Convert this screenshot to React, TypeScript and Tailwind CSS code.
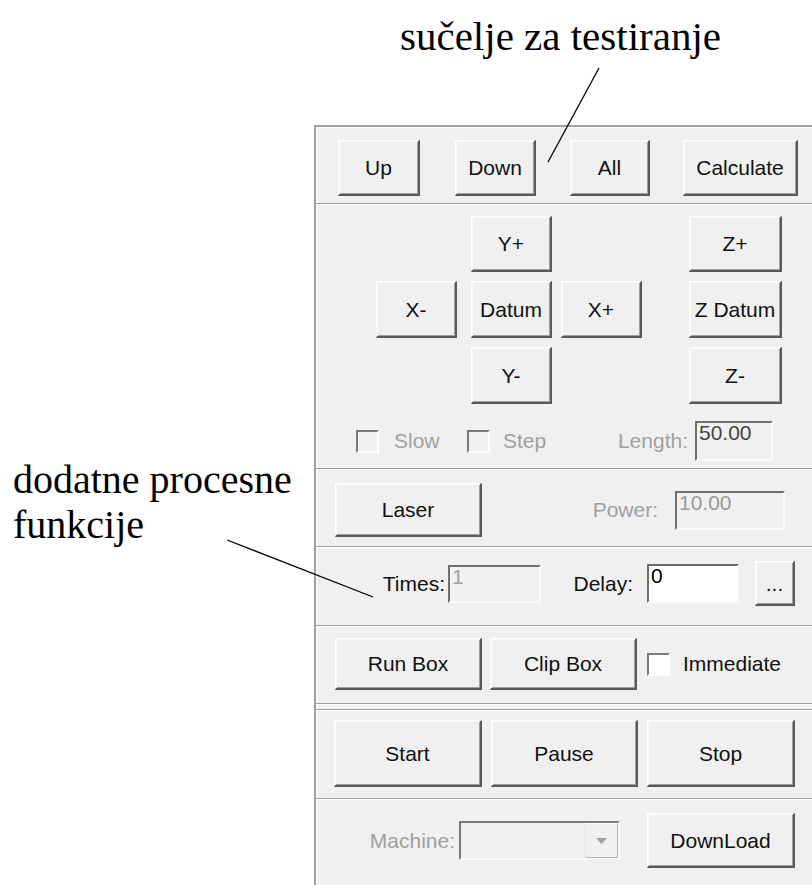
const ui = "font-['Liberation_Sans',Arial,sans-serif]";
const serif = "font-['Liberation_Serif','Times_New_Roman',serif]";

function Btn({ label, className = "" }: { label: string; className?: string }) {
  return (
    <div
      className={
        "flex shrink-0 items-center justify-center border-t border-l border-r-2 border-b-2 border-t-white border-l-white border-r-[#5a5a5a] border-b-[#5a5a5a] bg-[#f0f0f0] text-[21px] leading-none text-[#111] shadow-[inset_1px_1px_0_#f8f8f8,inset_-1px_-1px_0_#a0a0a0] " +
        className
      }
    >
      {label}
    </div>
  );
}

function Field({ value, className = "" }: { value: string; className?: string }) {
  return (
    <div
      className={
        "flex shrink-0 items-start border-2 border-t-[#6e6e6e] border-l-[#6e6e6e] border-r-[#fafafa] border-b-[#fafafa] pl-[2px] text-[21px] leading-[20px] " +
        className
      }
    >
      {value}
    </div>
  );
}

function Check({ className = "" }: { className?: string }) {
  return (
    <div
      className={
        "h-[23px] w-[23px] shrink-0 border-2 border-t-[#7a7a7a] border-l-[#7a7a7a] border-r-white border-b-white " +
        className
      }
    />
  );
}

export default function App() {
  return (
    <div className={"relative flex h-[885px] w-[812px] flex-col overflow-hidden bg-white " + ui}>
      {/* heading above the panel */}
      <div className={"h-[125px] shrink-0 pl-[400px] pt-[16px] text-[41px] leading-none text-black " + serif}>
        sučelje za testiranje
      </div>

      <div className="flex flex-1">
        {/* side note */}
        <div className={"w-[314px] shrink-0 pl-[13px] pt-[332px] text-[40px] leading-[45px] text-black " + serif}>
          dodatne procesne
          <br />
          funkcije
        </div>

        {/* control panel */}
        <div className="flex w-[498px] shrink-0 flex-col border-t-2 border-l-2 border-[#a0a0a0] bg-[#f0f0f0] shadow-[inset_1px_1px_0_#fff]">
          {/* Up / Down / All / Calculate */}
          <div className="flex h-[77px] items-start border-b border-[#a0a0a0] pl-[22px] pt-[13px]">
            <Btn label="Up" className="h-[56px] w-[82px]" />
            <Btn label="Down" className="ml-[35px] h-[56px] w-[81px]" />
            <Btn label="All" className="ml-[34px] h-[56px] w-[80px]" />
            <Btn label="Calculate" className="ml-[33px] h-[56px] w-[115px]" />
          </div>

          {/* jog pad */}
          <div className="h-[265px] border-t border-b border-t-white border-b-[#a0a0a0] pl-[60px] pt-[11px]">
            <div className="grid grid-cols-[81px_14px_81px_9px_81px_47px_93px] grid-rows-[56px_57px_57px] gap-y-[9px]">
              <Btn label="Y+" className="col-start-3 row-start-1" />
              <Btn label="Z+" className="col-start-7 row-start-1" />
              <Btn label="X-" className="col-start-1 row-start-2" />
              <Btn label="Datum" className="col-start-3 row-start-2" />
              <Btn label="X+" className="col-start-5 row-start-2" />
              <Btn label="Z Datum" className="col-start-7 row-start-2" />
              <Btn label="Y-" className="col-start-3 row-start-3" />
              <Btn label="Z-" className="col-start-7 row-start-3" />
            </div>
            <div className="-ml-[20px] mt-[17px] flex h-[40px] items-center text-[21px] text-[#a0a0a0]">
              <Check className="bg-[#f0f0f0]" />
              <span className="ml-[15px] w-[73px]">Slow</span>
              <Check className="bg-[#f0f0f0]" />
              <span className="ml-[13px] w-[57px]">Step</span>
              <span className="w-[128px] text-right">Length:</span>
              <Field value="50.00" className="ml-[7px] h-[40px] w-[78px] text-[#444]" />
            </div>
          </div>

          {/* laser */}
          <div className="h-[78px] border-t border-b border-t-white border-b-[#a0a0a0] pt-[13px]">
            <div className="flex h-[54px] items-center text-[21px]">
              <Btn label="Laser" className="ml-[19px] h-[54px] w-[147px]" />
              <span className="w-[176px] text-right text-[#a0a0a0]">Power:</span>
              <Field value="10.00" className="ml-[17px] h-[39px] w-[110px] text-[#9a9a9a]" />
            </div>
          </div>

          {/* times / delay */}
          <div className="h-[79px] border-t border-b border-t-white border-b-[#a0a0a0] pt-[13px]">
            <div className="flex h-[45px] items-center text-[21px] text-[#111]">
              <span className="w-[129px] text-right">Times:</span>
              <Field value="1" className="ml-[3px] h-[38px] w-[93px] text-[#a0a0a0]" />
              <span className="w-[92px] text-right">Delay:</span>
              <Field value="0" className="ml-[14px] h-[39px] w-[92px] bg-white text-black" />
              <Btn label="..." className="ml-[16px] h-[45px] w-[40px] text-[16px]" />
            </div>
          </div>

          {/* run box / clip box */}
          <div className="h-[78px] border-t border-b border-t-white border-b-[#a0a0a0] pt-[11px]">
            <div className="flex h-[52px] items-center text-[21px] text-[#111]">
              <Btn label="Run Box" className="ml-[19px] h-[52px] w-[147px]" />
              <Btn label="Clip Box" className="ml-[8px] h-[52px] w-[147px]" />
              <Check className="ml-[10px] bg-white" />
              <span className="ml-[13px]">Immediate</span>
            </div>
          </div>

          <div className="h-[6px] border-t border-b border-t-white border-b-[#a0a0a0]" />

          {/* start / pause / stop */}
          <div className="h-[89px] border-t border-b border-t-white border-b-[#a0a0a0] pt-[9px]">
            <div className="flex">
              <Btn label="Start" className="ml-[18px] h-[67px] w-[148px]" />
              <Btn label="Pause" className="ml-[9px] h-[67px] w-[147px]" />
              <Btn label="Stop" className="ml-[9px] h-[67px] w-[148px]" />
            </div>
          </div>

          {/* machine */}
          <div className="flex-1 border-t border-t-white pt-[13px]">
            <div className="flex h-[55px] items-center text-[21px]">
              <span className="w-[139px] text-right text-[#a0a0a0]">Machine:</span>
              <div className="ml-[4px] flex h-[39px] w-[161px] justify-end border-2 border-t-[#7a7a7a] border-l-[#7a7a7a] border-r-[#fafafa] border-b-[#fafafa] bg-[#f0f0f0]">
                <div className="flex w-[33px] items-center justify-center border border-t-white border-l-[#e4e4e4] border-r-[#b4b4b4] border-b-[#b4b4b4] bg-[#f0f0f0]">
                  <svg width="11" height="6" viewBox="0 0 11 6">
                    <path d="M0 0h11L5.5 6z" fill="#a0a0a0" />
                  </svg>
                </div>
              </div>
              <Btn label="DownLoad" className="ml-[27px] h-[55px] w-[148px]" />
            </div>
          </div>
        </div>
      </div>

      {/* callout lines */}
      <svg className="pointer-events-none absolute inset-0" width="812" height="885">
        <line x1="599" y1="68" x2="548" y2="162" stroke="#000" strokeWidth="1.3" />
        <line x1="227" y1="540" x2="373" y2="597" stroke="#000" strokeWidth="1.3" />
      </svg>
    </div>
  );
}
